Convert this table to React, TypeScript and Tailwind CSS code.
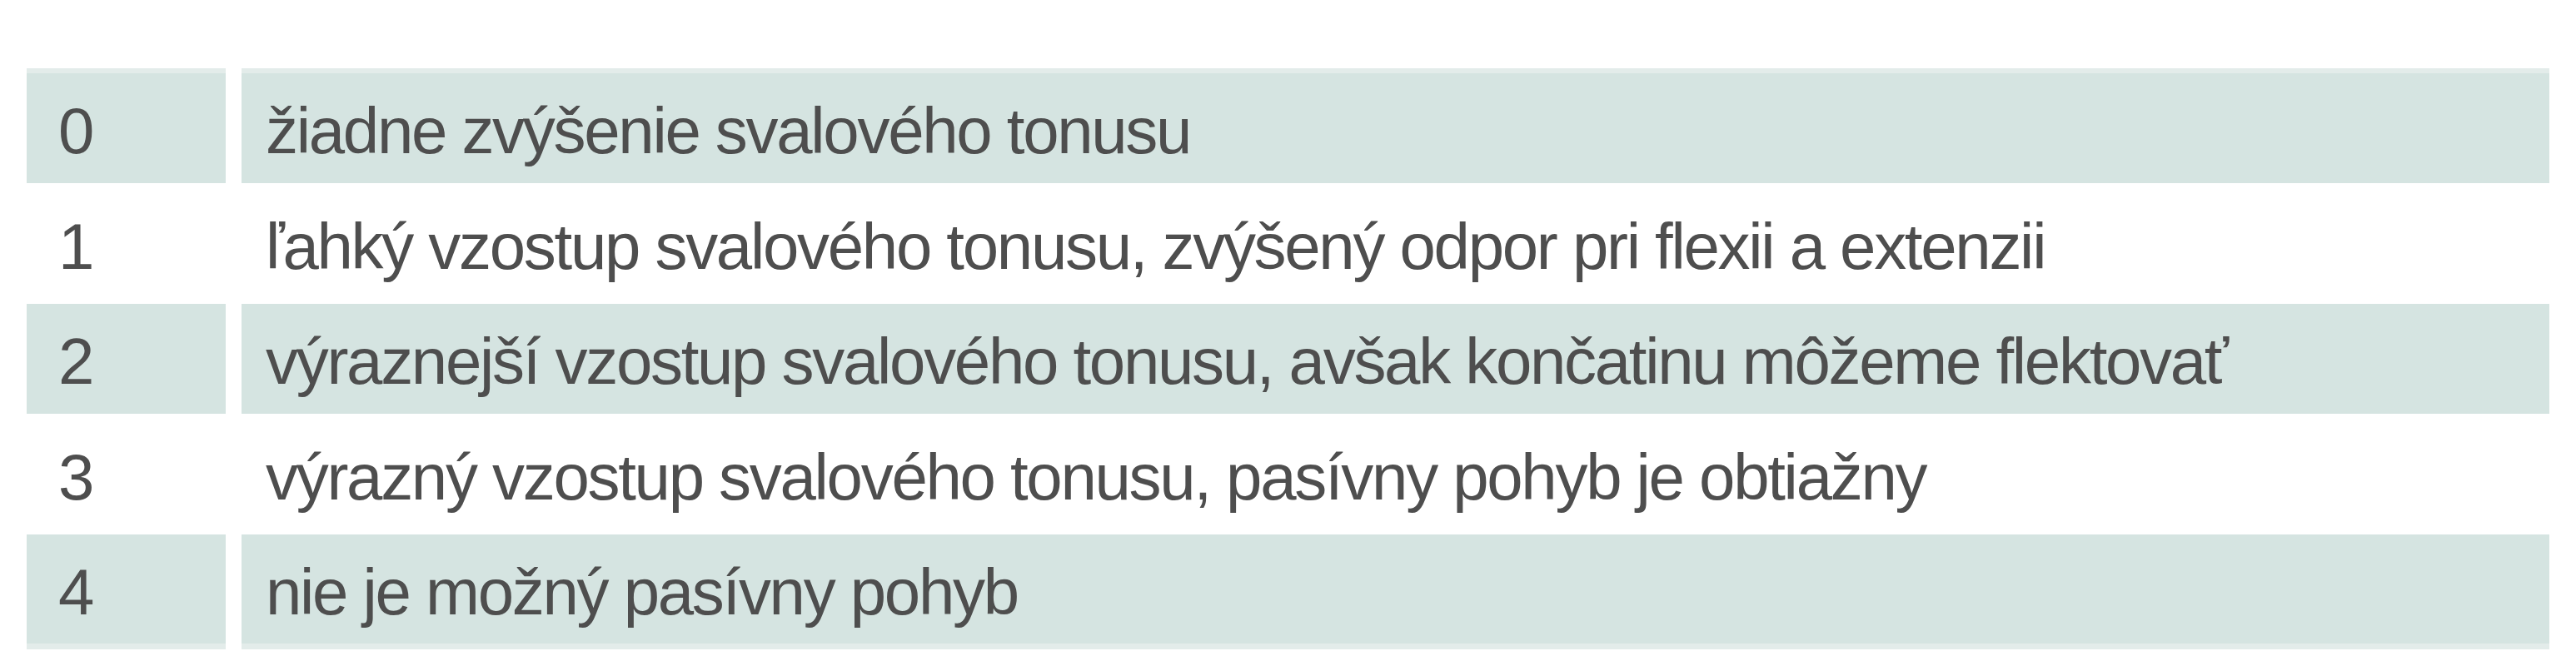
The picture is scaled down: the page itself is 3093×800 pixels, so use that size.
const rows = [
  { grade: "0", text: "žiadne zvýšenie svalového tonusu", shaded: true },
  {
    grade: "1",
    text: "ľahký vzostup svalového tonusu, zvýšený odpor pri flexii a extenzii",
    shaded: false,
  },
  {
    grade: "2",
    text: "výraznejší vzostup svalového tonusu, avšak končatinu môžeme flektovať",
    shaded: true,
  },
  {
    grade: "3",
    text: "výrazný vzostup svalového tonusu, pasívny pohyb je obtiažny",
    shaded: false,
  },
  { grade: "4", text: "nie je možný pasívny pohyb", shaded: true },
];

export default function App() {
  return (
    <div className="w-[3093px] h-[800px] bg-white pt-[82px] pl-[32px] font-['Liberation_Sans',Arial,sans-serif] text-[78px] leading-none tracking-[-2.3px] text-[#4e4e4e]">
      <div className="w-[3029px] flex flex-col">
        {rows.map((row, index) => {
          const first = index === 0;
          const last = index === rows.length - 1;
          let height = row.shaded ? "h-[132px]" : "h-[145px]";
          if (first) height = "h-[138px]";
          if (last) height = "h-[138px]";
          let cell = "";
          if (row.shaded) cell = "bg-[#d5e4e1]";
          if (first) cell += " border-t-[6px] border-[#e3ecea]";
          if (last) cell += " border-b-[7px] border-[#e3ecea]";
          return (
            <div key={row.grade} className={`flex gap-[19px] ${height}`}>
              <div className={`w-[239px] flex items-center pl-[38px] pt-[6px] ${cell}`}>
                {row.grade}
              </div>
              <div className={`flex-1 flex items-center pl-[29px] pt-[6px] ${cell}`}>
                {row.text}
              </div>
            </div>
          );
        })}
      </div>
    </div>
  );
}
